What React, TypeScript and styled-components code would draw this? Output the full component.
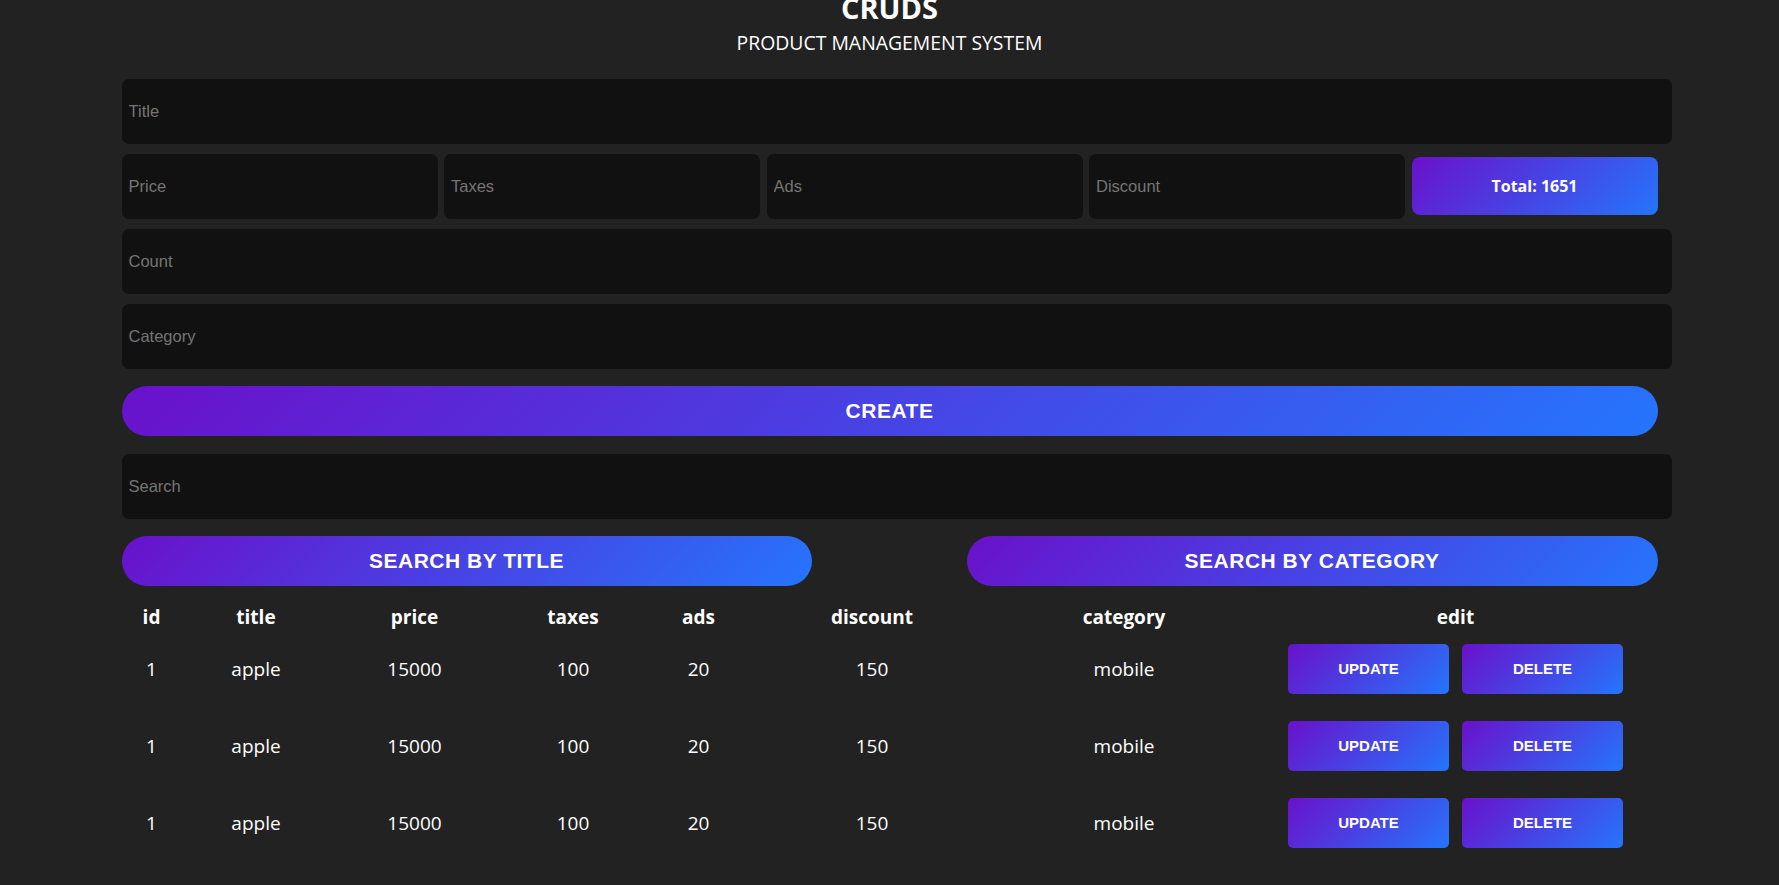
import React from "react";
import styled, { createGlobalStyle } from "styled-components";

const GlobalStyle = createGlobalStyle`
  * { box-sizing: border-box; }
  html, body { margin: 0; padding: 0; background: #222222; color: #ffffff; overflow: hidden; }
  body { font-family: "Open Sans", "Noto Sans", sans-serif; }
`;

const gradient = "linear-gradient(135deg, #6a11cb 0%, #2575fc 100%)";

const Page = styled.main`
  width: 1536px;
  margin: 0 auto;
`;

const Header = styled.header`
  display: flex;
  flex-direction: column;
  align-items: center;
  margin-top: -7px;
  margin-bottom: 26.5px;
`;

const Title = styled.h1`
  margin: 0;
  font-size: 29px;
  line-height: 29px;
  font-weight: 700;
`;

const Subtitle = styled.h2`
  margin: 11px 0 0;
  font-size: 19.4px;
  line-height: 19px;
  font-weight: 400;
  text-transform: uppercase;
`;

const Form = styled.section`
  display: flex;
  flex-direction: column;
  gap: 10px;
`;

const Field = styled.input<{ $wide?: boolean }>`
  display: block;
  width: ${(p) => (p.$wide ? "calc(100% + 14px)" : "100%")};
  height: 65px;
  padding: 0 7px;
  border: none;
  outline: none;
  border-radius: 7px;
  background: #111111;
  color: #ffffff;
  font-family: "Liberation Sans", Arial, sans-serif;
  font-size: 16.5px;
  &::placeholder { color: #757575; }
`;

const PriceRow = styled.div`
  display: grid;
  grid-template-columns: repeat(4, 1fr) 246px;
  column-gap: 6.5px;
  align-items: center;
`;

const Total = styled.div`
  height: 58px;
  border-radius: 8px;
  background: ${gradient};
  display: flex;
  align-items: center;
  justify-content: center;
  font-size: 16px;
  font-weight: 700;
`;

const PillButton = styled.button<{ $width?: string; $mt?: number }>`
  display: block;
  width: ${(p) => p.$width ?? "100%"};
  height: 50px;
  margin-top: ${(p) => p.$mt ?? 0}px;
  border: none;
  border-radius: 25px;
  background: ${gradient};
  color: #ffffff;
  font-family: "Liberation Sans", Arial, sans-serif;
  font-weight: 700;
  font-size: 21px;
  letter-spacing: 0.5px;
  text-transform: uppercase;
  cursor: pointer;
`;

const SearchBlock = styled.div`
  margin-top: 18px;
`;

const SearchRow = styled.div`
  display: flex;
  justify-content: space-between;
  margin-top: 17px;
`;

const Table = styled.table`
  width: 100%;
  margin-top: 19.5px;
  border-collapse: collapse;
  table-layout: fixed;
  text-align: center;
`;

const Col = styled.col<{ $w: number }>`
  width: ${(p) => p.$w}px;
`;

const Th = styled.th`
  height: 25px;
  padding: 0;
  font-size: 19px;
  line-height: 25px;
  font-weight: 700;
`;

const Td = styled.td`
  height: 77px;
  padding: 0;
  font-size: 19px;
  vertical-align: middle;
`;

const Actions = styled.div`
  display: flex;
  justify-content: center;
  gap: 13px;
`;

const SmallButton = styled.button`
  width: 161px;
  height: 50px;
  border: none;
  border-radius: 5px;
  background: ${gradient};
  color: #ffffff;
  font-family: "Liberation Sans", Arial, sans-serif;
  font-weight: 700;
  font-size: 15px;
  text-transform: uppercase;
  cursor: pointer;
`;

const columns = [
  { key: "id", w: 60 },
  { key: "title", w: 149 },
  { key: "price", w: 168 },
  { key: "taxes", w: 149 },
  { key: "ads", w: 102 },
  { key: "discount", w: 245 },
  { key: "category", w: 259 },
  { key: "edit", w: 404 },
];

const rows = [
  { id: 1, title: "apple", price: 15000, taxes: 100, ads: 20, discount: 150, category: "mobile" },
  { id: 1, title: "apple", price: 15000, taxes: 100, ads: 20, discount: 150, category: "mobile" },
  { id: 1, title: "apple", price: 15000, taxes: 100, ads: 20, discount: 150, category: "mobile" },
];

export default function App() {
  return (
    <>
      <GlobalStyle />
      <Page>
        <Header>
          <Title>CRUDS</Title>
          <Subtitle>product management system</Subtitle>
        </Header>
        <Form>
          <Field $wide placeholder="Title" />
          <PriceRow>
            <Field placeholder="Price" />
            <Field placeholder="Taxes" />
            <Field placeholder="Ads" />
            <Field placeholder="Discount" />
            <Total>Total: 1651</Total>
          </PriceRow>
          <Field $wide placeholder="Count" />
          <Field $wide placeholder="Category" />
        </Form>
        <PillButton $mt={17}>create</PillButton>
        <SearchBlock>
          <Field $wide placeholder="Search" />
        </SearchBlock>
        <SearchRow>
          <PillButton $width="690px">search by title</PillButton>
          <PillButton $width="691px">search by category</PillButton>
        </SearchRow>
        <Table>
          <colgroup>
            {columns.map((c) => (
              <Col key={c.key} $w={c.w} />
            ))}
          </colgroup>
          <thead>
            <tr>
              {columns.map((c) => (
                <Th key={c.key}>{c.key}</Th>
              ))}
            </tr>
          </thead>
          <tbody>
            {rows.map((r, i) => (
              <tr key={i}>
                <Td>{r.id}</Td>
                <Td>{r.title}</Td>
                <Td>{r.price}</Td>
                <Td>{r.taxes}</Td>
                <Td>{r.ads}</Td>
                <Td>{r.discount}</Td>
                <Td>{r.category}</Td>
                <Td>
                  <Actions>
                    <SmallButton>update</SmallButton>
                    <SmallButton>delete</SmallButton>
                  </Actions>
                </Td>
              </tr>
            ))}
          </tbody>
        </Table>
      </Page>
    </>
  );
}
